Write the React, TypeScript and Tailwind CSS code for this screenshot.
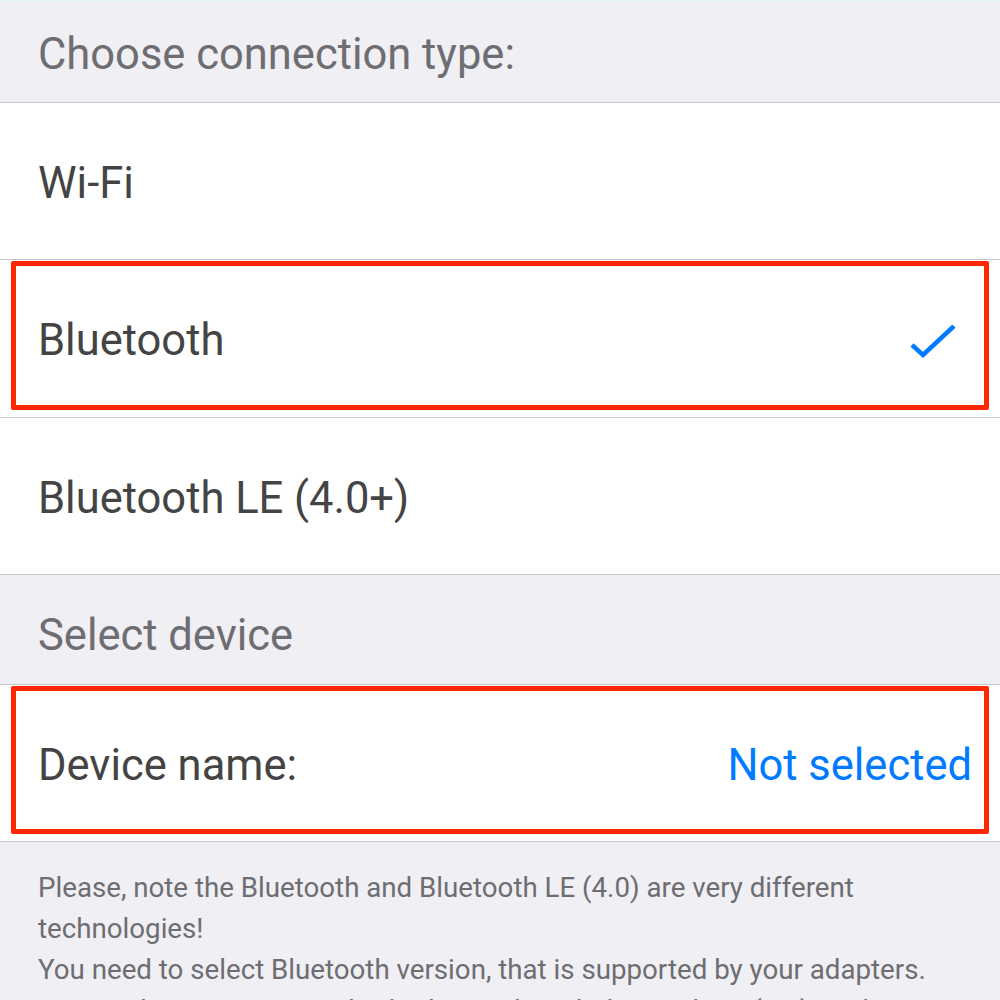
import React from 'react';

const font = { fontFamily: 'Roboto, "Noto Sans", sans-serif' };

const Check = () => (
  <svg width="48" height="40" viewBox="0 0 48 40" className="mt-[8px] block">
    <path d="M3 20 L14 30 L45 1" fill="none" stroke="#007aff" strokeWidth="4.5" />
  </svg>
);

const Highlight = () => (
  <div className="pointer-events-none absolute inset-x-[11px] top-[1px] bottom-[7px] rounded-[2px] border-[5px] border-[#ff2600]" />
);

export default function App() {
  return (
    <div className="h-[1000px] w-[1000px] overflow-hidden bg-[#efeff4]" style={font}>
      <div className="h-px bg-[#dff3fb]" />
      <div className="flex h-[102px] items-center border-b border-[#c8c7cc] px-[38px] pt-[6px]">
        <span className="text-[43.5px] text-[#6d6d72]">Choose connection type:</span>
      </div>

      <div className="bg-white">
        <div className="flex h-[157px] items-center border-b border-[#c8c7cc] px-[38px] pt-[6px]">
          <span className="text-[43.5px] text-[#444444]">Wi-Fi</span>
        </div>
        <div className="relative flex h-[158px] items-center justify-between border-b border-[#c8c7cc] pl-[38px] pr-[43px] pt-[4px]">
          <span className="text-[43.5px] text-[#444444]">Bluetooth</span>
          <Check />
          <Highlight />
        </div>
        <div className="flex h-[157px] items-center border-b border-[#c8c7cc] px-[38px] pt-[5px]">
          <span className="text-[43.5px] text-[#444444]">Bluetooth LE (4.0+)</span>
        </div>
      </div>

      <div className="flex h-[110px] items-center border-b border-[#c8c7cc] px-[38px] pt-[12px]">
        <span className="text-[43.5px] text-[#6d6d72]">Select device</span>
      </div>

      <div className="relative flex h-[157px] items-center justify-between border-b border-[#c8c7cc] bg-white pl-[38px] pr-[28px] pt-[6px]">
        <span className="text-[43.5px] text-[#444444]">Device name:</span>
        <span className="text-[43.5px] text-[#007aff]">Not selected</span>
        <Highlight />
      </div>

      <div className="px-[38px] pt-[25px] text-[27.7px] leading-[41px] text-[#6d6d72]">
        Please, note the Bluetooth and Bluetooth LE (4.0) are very different technologies!
        <br />
        You need to select Bluetooth version, that is supported by your adapters.
        <br />
        Some adapters supports both Bluetooth and Bluetooth LE (4.0). In that case you can select any version.
      </div>
    </div>
  );
}
